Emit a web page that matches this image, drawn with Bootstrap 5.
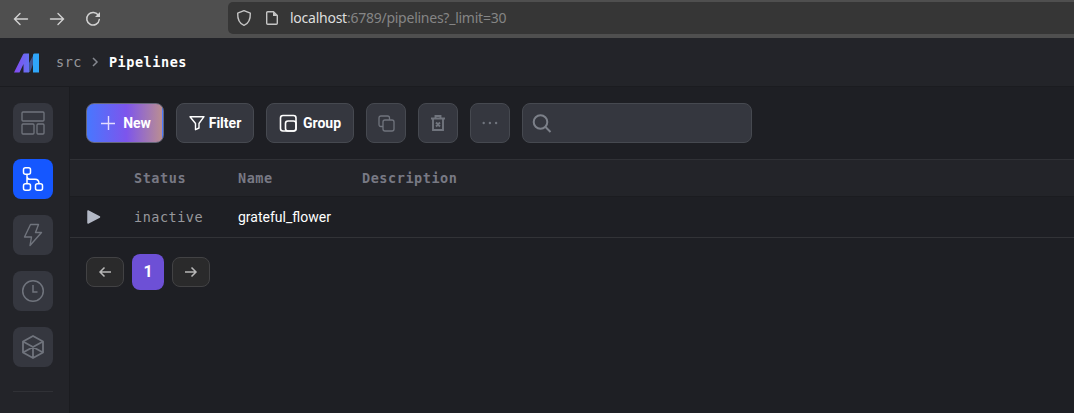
<!DOCTYPE html>
<html lang="en" data-bs-theme="dark">
<head>
<meta charset="utf-8">
<meta name="viewport" content="width=device-width, initial-scale=1">
<title>Pipelines</title>
<link href="https://cdn.jsdelivr.net/npm/bootstrap@5.3.0/dist/css/bootstrap.min.css" rel="stylesheet">
<style>
body{background:#1e1f24;font-family:Roboto,sans-serif;font-size:14px;color:#fff}
svg{display:block;flex:none;fill:none;stroke:currentColor}
.mono{font-family:"DejaVu Sans Mono",monospace;font-size:13.5px;letter-spacing:.55px}
.mono-light{font-family:"DejaVu Sans Mono",monospace;font-size:13.5px;letter-spacing:.5px;color:#98989c}
.browser{height:38px;background:#4f4f4f;color:#d2d2d2;padding-left:13px}
.browser-icon{margin-left:20px}
.address{height:32px;margin-left:127px;margin-top:-2px;background:#363636;border-radius:5px 0 0 5px;padding-left:8px;font-family:"Noto Sans","Open Sans",sans-serif;font-size:14px;letter-spacing:-.25px;color:#858585}
.address b{font-weight:400;color:#dedede}
.address-text{margin:-1px 0 0 11px}
.topbar{height:49px;background:#232429;border-bottom:1px solid #1b1c20;padding-left:14px}
.brand-mark{stroke:none;margin-top:2px}
.workspace{height:326px}
.sidebar{width:70px;background:#232429;border-right:1px solid #1b1c20;padding:16px 0 0 13px}
.tile{width:40px;height:40px;border-radius:8px;background:#35373f;color:#70747d;padding:0;border:0}
.tile.active{background:#1557ff!important;color:#fff}
.divider{width:40px;height:1px;margin-top:8px;background:#303136}
.toolbar{padding:16px;gap:12px}
.tool{height:40px;border:1px solid #464950;border-radius:8px;background:#35373f;color:#fff;font-size:14px;font-weight:700;padding:0}
.muted-tool{width:40px;color:#70747d}
.new{width:78px;padding-left:2px;background:linear-gradient(90deg,#4877ff 0%,#7d55ec 52%,#b98d93 98%,#4b7bff 99%);border-color:#66677a}
.search{width:230px;padding-left:9px;color:#7c8089}
.pipes{table-layout:fixed;--bs-table-bg:transparent;margin:0;border-top:1px solid #303136}
.pipes th,.pipes td{padding:1px 0 0 16px;vertical-align:middle}
.pipes th{height:37px;background:#232429;color:#787984;border-bottom:1px solid #1b1c20}
.pipes td{height:41px;border-bottom:1px solid #323337;color:#fff}
.pager{padding:16px;gap:8px}
.step{width:38px;height:30px;background:#2a2a2b;border:1px solid #424244;border-radius:8px;color:#b7b7b7;padding:0}
.current{width:32px;height:36px;background:#6d50d6;border:0;border-radius:8px;color:#fff;font-weight:700;padding:0}
</style>
</head>
<body class="overflow-hidden">
<div class="browser d-flex align-items-center">
  <svg width="16" height="16" stroke-width="1.4" stroke-linecap="round"><path d="M14.5 8H1.5M7 2.5 1.5 8 7 13.5"/></svg>
  <svg class="browser-icon" width="16" height="16" stroke-width="1.4" stroke-linecap="round"><path d="M1.500 8H14.500M9 2.500 14.500 8 9 13.500"/></svg>
  <svg class="browser-icon" width="16" height="16" stroke-width="1.5" stroke-linecap="round"><path d="M13.500 4.600A6.300 6.300 0 1 0 14.300 8.500"/><path d="M15 1V6H10z" fill="currentColor" stroke="none"/></svg>
  <div class="address d-flex align-items-center flex-grow-1">
    <svg width="16" height="18" stroke-width="1.4" stroke-linejoin="round" color="#c5c5c5"><path d="M8 1.700 14.300 4.200C14.500 9.500 12.500 14.500 8 16.300 3.500 14.500 1.500 9.500 1.700 4.200z"/></svg>
    <svg style="margin-left:13px" width="14" height="16" stroke-width="1.4" stroke-linejoin="round" color="#c5c5c5"><path d="M8.500 1.700H2.700Q1.700 1.700 1.700 2.700V13.300Q1.700 14.300 2.700 14.300H11.300Q12.300 14.300 12.300 13.300V5.500z"/><path d="M8 1.700V6H12.500z" fill="currentColor" stroke="none"/></svg>
    <span class="address-text"><b>localhost</b>:6789/pipelines?_limit=30</span>
  </div>
</div>
<header class="topbar d-flex align-items-center">
  <svg class="brand-mark" width="25" height="20"><defs><linearGradient id="violet"><stop stop-color="#8548f0"/><stop offset="1" stop-color="#6472f2"/></linearGradient></defs><path d="M15 10V19H16L20 9V1z" fill="#405591"/><path d="M0 19.500 9 1.500Q9.500.500 10.500.500H15V19.500H9.500V11L5.500 19.500z" fill="url(#violet)"/><path d="M19 1.500Q19.500.500 20.500.500H25V19.500H19z" fill="#2fa6fa"/></svg>
  <span class="mono-light" style="margin-left:17px">src</span>
  <svg style="margin-left:9px" width="8" height="12" stroke-width="1.500" color="#85878f"><path d="M2 2 6 6 2 10"/></svg>
  <span class="mono fw-bold" style="margin-left:10px">Pipelines</span>
</header>
<div class="workspace d-flex">
  <nav class="sidebar d-flex flex-column gap-3 flex-shrink-0">
    <button class="tile btn d-flex align-items-center justify-content-center"><svg width="24" height="24" stroke-width="1.300"><rect x="1" y="1" width="22" height="9" rx="1"/><rect x="1" y="13" width="12" height="10" rx="1"/><rect x="16" y="13" width="7" height="10" rx="1"/></svg></button>
    <button class="tile active btn d-flex align-items-center justify-content-center"><svg width="24" height="24" stroke-width="1.500"><rect x="2.500" y=".8" width="7" height="6.500" rx="2"/><rect x="2.500" y="16.700" width="7" height="6.500" rx="2"/><rect x="14.500" y="16.700" width="7" height="6.500" rx="2"/><path d="M6 7.300V16.700M6 10Q6.500 12.300 9 12.300H14Q18 12.300 18 16.700"/></svg></button>
    <button class="tile btn d-flex align-items-center justify-content-center"><svg width="24" height="24" stroke-width="1.400" stroke-linejoin="round"><path d="M9.500 1.500H17.500L14.500 9.500H20.500L9 22.500 10.500 14H3.500z"/></svg></button>
    <button class="tile btn d-flex align-items-center justify-content-center"><svg width="24" height="24" stroke-width="1.500"><circle cx="12" cy="12" r="10.300"/><path d="M12 6V13H16.500"/></svg></button>
    <button class="tile btn d-flex align-items-center justify-content-center"><svg width="24" height="24" stroke-width="1.800" stroke-linejoin="round"><path d="M12 1 22 6.500V17.500L12 23 2 17.500V6.500zM2 6.500 22 17.500M22 6.500 2 17.500M12 12V23"/></svg></button>
    <div class="divider"></div>
  </nav>
  <main class="flex-grow-1">
    <div class="toolbar d-flex">
      <button class="tool new btn d-flex align-items-center justify-content-center"><svg width="14" height="14" stroke-width="1.400" color="#e4ddff"><path d="M7.500 0V14M0 7.500H14"/></svg><span class="ms-2">New</span></button>
      <button class="tool btn d-flex align-items-center justify-content-center" style="width:78px"><svg width="16" height="16" stroke-width="1.400" stroke-linejoin="round"><path d="M1 1.700H15L10 8.500V13L6.500 14.700V8.500z"/></svg><span class="ms-1">Filter</span></button>
      <button class="tool btn d-flex align-items-center justify-content-center" style="width:88px"><svg width="18" height="18" stroke-width="1.600"><rect x="1.500" y="1.500" width="15.500" height="15.500" rx="2.500"/><rect x="6.500" y="7" width="10.500" height="10" rx="2.500"/></svg><span style="margin-left:6px">Group</span></button>
      <button class="tool muted-tool btn d-flex align-items-center justify-content-center"><svg width="17" height="17" stroke-width="1.300"><rect x="5" y="5" width="11" height="11" rx="2"/><path d="M5 11.500H3Q1 11.500 1 9.500V3Q1 1 3 1H9.500Q11.500 1 11.500 3V5"/></svg></button>
      <button class="tool muted-tool btn d-flex align-items-center justify-content-center"><svg width="16" height="18" stroke-width="1.900"><path d="M1 4.500H15M3 4.500V16H13V4.500M5.500 4V2H10.500V4M6 8.500 10 12.500M10 8.500 6 12.500"/></svg></button>
      <button class="tool muted-tool btn d-flex align-items-center justify-content-center"><svg width="16" height="4"><g fill="currentColor" stroke="none"><circle cx="1.700" cy="2" r="1.200"/><circle cx="7.900" cy="2" r="1.200"/><circle cx="14.100" cy="2" r="1.200"/></g></svg></button>
      <div class="tool search d-flex align-items-center"><svg width="20" height="20" stroke-width="2"><circle cx="8.500" cy="9" r="6.800"/><path d="M13.500 14 18.500 19"/></svg></div>
    </div>
    <table class="pipes table border-bottom-0">
      <colgroup><col style="width:48px"><col style="width:104px"><col style="width:124px"><col></colgroup>
      <thead><tr class="mono"><th></th><th>Status</th><th>Name</th><th>Description</th></tr></thead>
      <tbody><tr><td><svg width="16" height="16" color="#b3b8c5" stroke-linejoin="round" stroke-width="1.5"><path d="M2 1 13.500 7 2 13z" fill="currentColor"/></svg></td><td><span class="mono-light">inactive</span></td><td>grateful_flower</td><td></td></tr></tbody>
    </table>
    <div class="pager d-flex align-items-center">
      <button class="step btn d-flex align-items-center justify-content-center"><svg width="14" height="12" stroke-width="1.500"><path d="M13 6H2M6.500 1.500 2 6 6.500 10.500"/></svg></button>
      <button class="current btn">1</button>
      <button class="step btn d-flex align-items-center justify-content-center"><svg width="14" height="12" stroke-width="1.500"><path d="M1 6H12M7.500 1.500 12 6 7.500 10.500"/></svg></button>
    </div>
  </main>
</div>
<script src="https://cdn.jsdelivr.net/npm/bootstrap@5.3.0/dist/js/bootstrap.bundle.min.js"></script>
</body>
</html>
